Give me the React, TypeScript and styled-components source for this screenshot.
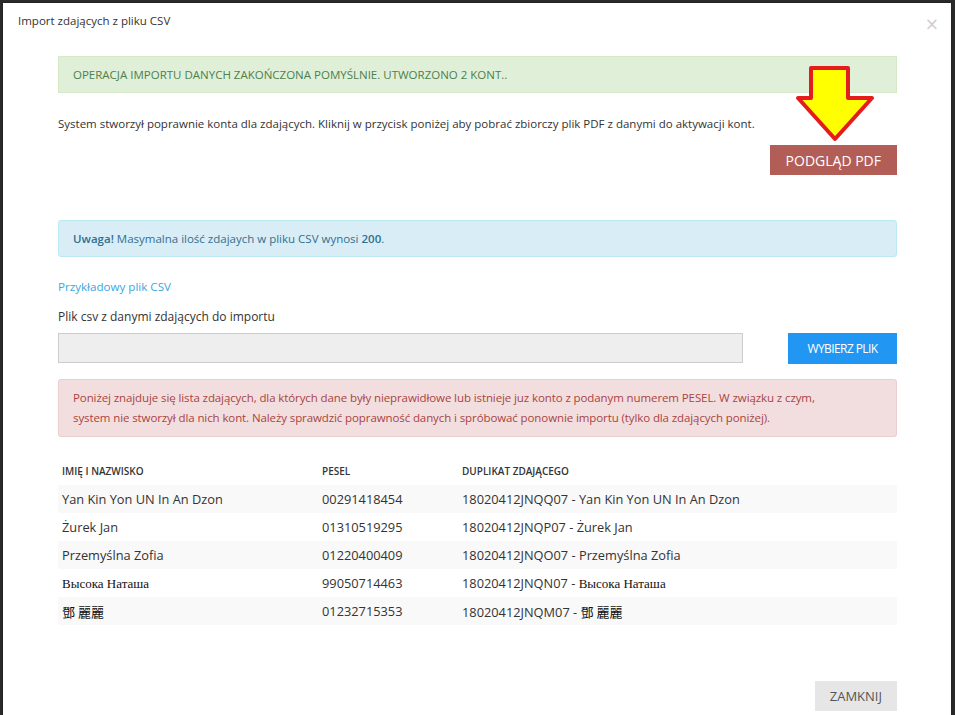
import React from 'react';
import styled, { createGlobalStyle } from 'styled-components';

const GlobalStyle = createGlobalStyle`
  html, body {
    margin: 0;
    padding: 0;
    background: #2a2a2a;
  }
  body {
    font-family: "Open Sans", "Noto Sans", sans-serif;
    color: #333;
  }
`;

const Backdrop = styled.div`
  height: 715px;
  overflow: hidden;
  background: #2a2a2a;
  padding: 3px 4px 0 3px;
  box-sizing: border-box;
`;

const Modal = styled.div`
  background: #fff;
  min-height: 760px;
  box-shadow: 0 0 2px rgba(0, 0, 0, 0.4);
`;

const ModalHeader = styled.div`
  display: flex;
  justify-content: space-between;
  align-items: center;
  padding: 9px 12px 0 15px;
  height: 27px;
  box-sizing: border-box;
`;

const ModalTitle = styled.h4`
  margin: 0;
  font-size: 11.5px;
  font-weight: 400;
  line-height: 18px;
  color: #333;
`;

const CloseButton = styled.button`
  border: 0;
  background: none;
  padding: 0;
  margin-top: 6px;
  font-family: "DejaVu Sans", sans-serif;
  font-size: 17px;
  line-height: 18px;
  color: #cfcfcf;
  cursor: pointer;
`;

const ModalBody = styled.div`
  padding: 26px 54px 0 55px;
`;

const Alert = styled.div<{ $variant: 'success' | 'info' | 'danger' }>`
  box-sizing: border-box;
  border: 1px solid;
  border-radius: ${(p) => (p.$variant === 'success' ? '0' : '3px')};
  padding: ${(p) => (p.$variant === 'danger' ? '8px 14px' : '9px 14px')};
  font-size: 11.5px;
  letter-spacing: ${(p) => (p.$variant === 'danger' ? '-0.1px' : '0')};
  line-height: ${(p) => (p.$variant === 'danger' ? '20px' : '17px')};
  background: ${(p) =>
    p.$variant === 'success' ? '#dfefd8' : p.$variant === 'info' ? '#d9edf7' : '#f2dede'};
  border-color: ${(p) =>
    p.$variant === 'success' ? '#d6e9c6' : p.$variant === 'info' ? '#bce8f1' : '#ebccd1'};
  color: ${(p) =>
    p.$variant === 'success' ? '#4e7f4e' : p.$variant === 'info' ? '#31708f' : '#a94442'};
  text-transform: ${(p) => (p.$variant === 'success' ? 'uppercase' : 'none')};

  strong {
    font-weight: 600;
  }
`;

const Lead = styled.p`
  margin: 22px 0 0;
  font-size: 11.5px;
  line-height: 18px;
`;

const PdfRow = styled.div`
  position: relative;
  display: flex;
  justify-content: flex-end;
  margin-top: 12px;
`;

const Arrow = styled.svg`
  position: absolute;
  right: 21px;
  top: -81px;
  width: 82px;
  height: 80px;
`;

const Button = styled.button<{ $tone: 'red' | 'blue' | 'grey' }>`
  border: 0;
  border-radius: 0;
  font-family: "Open Sans", sans-serif;
  text-transform: uppercase;
  cursor: pointer;
  height: ${(p) => (p.$tone === 'blue' ? '31px' : '30px')};
  width: ${(p) => (p.$tone === 'blue' ? '109px' : 'auto')};
  padding: ${(p) => (p.$tone === 'red' ? '0 16px' : p.$tone === 'blue' ? '0' : '0 15px')};
  font-size: ${(p) => (p.$tone === 'red' ? '14px' : p.$tone === 'blue' ? '12px' : '13px')};
  letter-spacing: ${(p) => (p.$tone === 'blue' ? '-0.6px' : '0')};
  background: ${(p) => (p.$tone === 'red' ? '#b35d57' : p.$tone === 'blue' ? '#2196f3' : '#e6e6e6')};
  color: ${(p) => (p.$tone === 'grey' ? '#555' : '#fff')};
`;

const InfoBlock = styled.div`
  margin-top: 45px;
`;

const SampleLink = styled.a`
  display: block;
  margin-top: 21px;
  font-size: 11.6px;
  line-height: 18px;
  color: #3aa6df;
  text-decoration: none;
`;

const FieldLabel = styled.label`
  display: block;
  margin-top: 12px;
  font-size: 12px;
  line-height: 18px;
  color: #333;
`;

const FileRow = styled.div`
  display: flex;
  align-items: flex-start;
  justify-content: space-between;
  margin-top: 7px;
`;

const FileInput = styled.div`
  width: 685px;
  height: 30px;
  box-sizing: border-box;
  background: #eeeeee;
  border: 1px solid #cccccc;
`;

const ErrorBlock = styled.div`
  margin-top: 15px;
`;

const Table = styled.table`
  width: 100%;
  margin-top: 19px;
  border-collapse: collapse;
`;

const Th = styled.th<{ $w?: number }>`
  width: ${(p) => (p.$w ? `${p.$w}px` : 'auto')};
  text-align: left;
  height: 29px;
  padding: 0 4px;
  box-sizing: border-box;
  font-size: 10px;
  font-weight: 600;
  text-transform: uppercase;
  color: #333;
`;

const Tr = styled.tr`
  &:nth-child(odd) {
    background: #f9f9f9;
  }
`;

const Td = styled.td`
  height: 28px;
  padding: 0 4px;
  font-size: 12.8px;
  color: #333;
`;

const Cyr = styled.span`
  font-family: "Liberation Serif", "DejaVu Serif", serif;
  font-size: 13px;
  color: #111;
`;

const Cjk = styled.span`
  font-family: "Noto Sans CJK TC", "Noto Sans CJK SC", sans-serif;
  font-size: 13px;
  color: #111;
`;

const Footer = styled.div`
  display: flex;
  justify-content: flex-end;
  margin-top: 56px;
`;

type Row = { name: React.ReactNode; pesel: string; code: string };

const rows: Row[] = [
  { name: 'Yan Kin Yon UN In An Dzon', pesel: '00291418454', code: '18020412JNQQ07' },
  { name: 'Żurek Jan', pesel: '01310519295', code: '18020412JNQP07' },
  { name: 'Przemyślna Zofia', pesel: '01220400409', code: '18020412JNQO07' },
  { name: <Cyr>Высока Наташа</Cyr>, pesel: '99050714463', code: '18020412JNQN07' },
  { name: <Cjk>鄧 麗麗</Cjk>, pesel: '01232715353', code: '18020412JNQM07' },
];

export default function App() {
  return (
    <>
      <GlobalStyle />
      <Backdrop>
        <Modal>
          <ModalHeader>
            <ModalTitle>Import zdających z pliku CSV</ModalTitle>
            <CloseButton aria-label="close">×</CloseButton>
          </ModalHeader>

          <ModalBody>
            <Alert $variant="success">
              Operacja importu danych zakończona pomyślnie. Utworzono 2 kont..
            </Alert>

            <Lead>
              System stworzył poprawnie konta dla zdających. Kliknij w przycisk poniżej aby pobrać
              zbiorczy plik PDF z danymi do aktywacji kont.
            </Lead>

            <PdfRow>
              <Arrow viewBox="796 64 82 80">
                <polygon
                  points="813,68 850,68 850,98 874,98 837,139 800,98 813,98"
                  fill="#ffff00"
                  stroke="#e51c1c"
                  strokeWidth="4"
                  strokeLinejoin="round"
                />
              </Arrow>
              <Button $tone="red">Podgląd PDF</Button>
            </PdfRow>

            <InfoBlock>
              <Alert $variant="info">
                <strong>Uwaga!</strong> Masymalna ilość zdajaych w pliku CSV wynosi{' '}
                <strong>200</strong>.
              </Alert>
            </InfoBlock>

            <SampleLink href="#">Przykładowy plik CSV</SampleLink>
            <FieldLabel>Plik csv z danymi zdających do importu</FieldLabel>

            <FileRow>
              <FileInput />
              <Button $tone="blue">Wybierz plik</Button>
            </FileRow>

            <ErrorBlock>
              <Alert $variant="danger">
                Poniżej znajduje się lista zdających, dla których dane były nieprawidłowe lub istnieje
                juz konto z podanym numerem PESEL. W związku z czym,
                <br />
                system nie stworzył dla nich kont. Należy sprawdzić poprawność danych i spróbować
                ponownie importu (tylko dla zdających poniżej).
              </Alert>
            </ErrorBlock>

            <Table>
              <thead>
                <tr>
                  <Th $w={260}>Imię i nazwisko</Th>
                  <Th $w={140}>Pesel</Th>
                  <Th>Duplikat zdającego</Th>
                </tr>
              </thead>
              <tbody>
                {rows.map((r) => (
                  <Tr key={r.pesel}>
                    <Td>{r.name}</Td>
                    <Td>{r.pesel}</Td>
                    <Td>
                      {r.code} - {r.name}
                    </Td>
                  </Tr>
                ))}
              </tbody>
            </Table>

            <Footer>
              <Button $tone="grey">Zamknij</Button>
            </Footer>
          </ModalBody>
        </Modal>
      </Backdrop>
    </>
  );
}
